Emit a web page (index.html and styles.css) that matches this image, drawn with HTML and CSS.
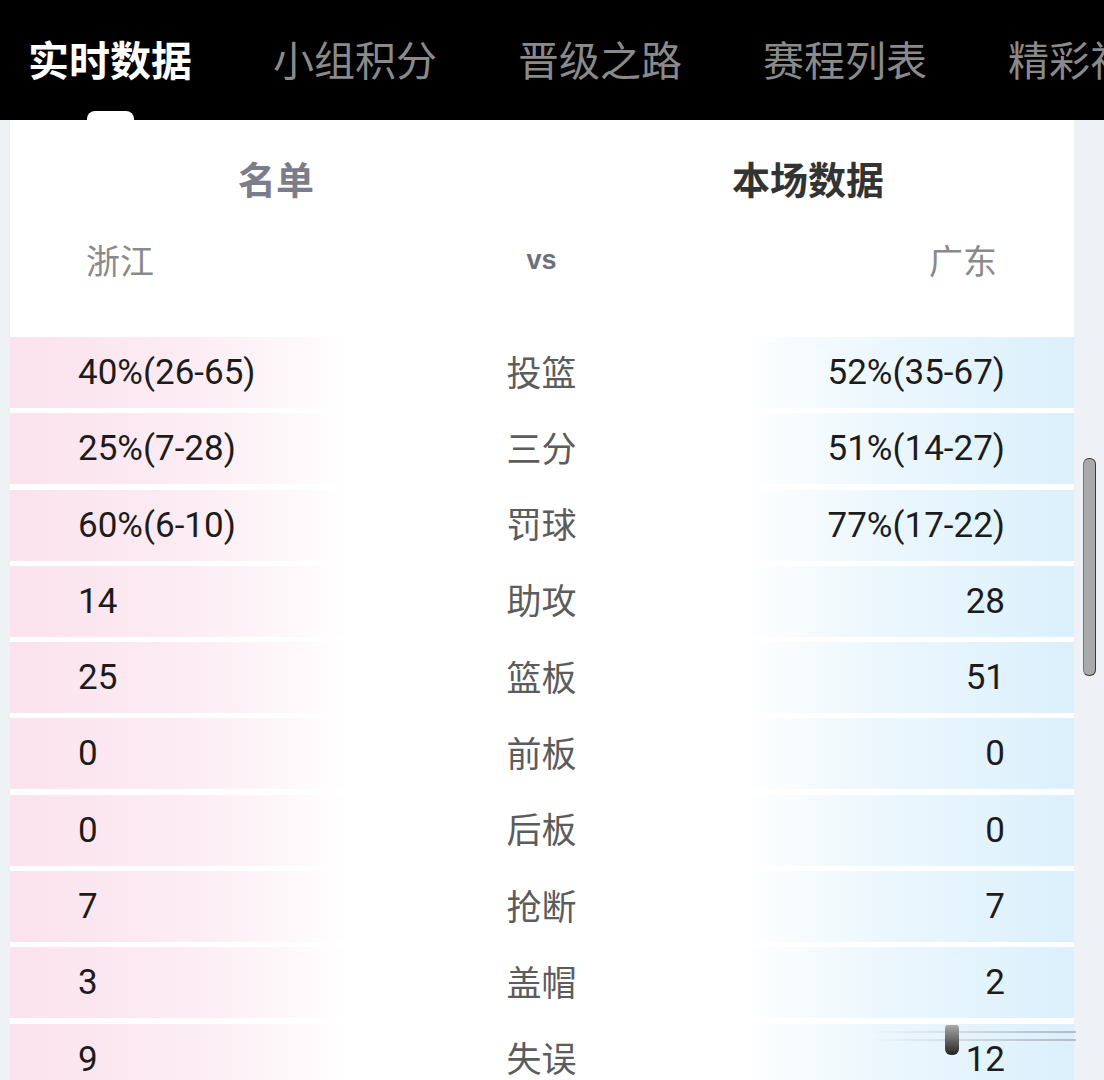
FILE: index.html
```html
<!DOCTYPE html>
<html lang="zh-CN">
<head>
<meta charset="utf-8">
<title>实时数据</title>
<link rel="stylesheet" href="styles.css">
</head>
<body>
<nav class="tabs">
  <div class="tab active">实时数据<span class="indicator"></span></div>
  <div class="tab">小组积分</div>
  <div class="tab">晋级之路</div>
  <div class="tab">赛程列表</div>
  <div class="tab">精彩视频</div>
</nav>
<main class="main">
  <section class="card">
    <div class="head">
      <div class="head-item dim">名单</div>
      <div class="head-item strong">本场数据</div>
    </div>
    <div class="teams">
      <div class="team left">浙江</div>
      <div class="vs">vs</div>
      <div class="team right">广东</div>
    </div>
    <div class="rows">
      <div class="row"><span class="v l">40%(26-65)</span><span class="lab">投篮</span><span class="v r">52%(35-67)</span></div>
      <div class="row"><span class="v l">25%(7-28)</span><span class="lab">三分</span><span class="v r">51%(14-27)</span></div>
      <div class="row"><span class="v l">60%(6-10)</span><span class="lab">罚球</span><span class="v r">77%(17-22)</span></div>
      <div class="row"><span class="v l">14</span><span class="lab">助攻</span><span class="v r">28</span></div>
      <div class="row"><span class="v l">25</span><span class="lab">篮板</span><span class="v r">51</span></div>
      <div class="row"><span class="v l">0</span><span class="lab">前板</span><span class="v r">0</span></div>
      <div class="row"><span class="v l">0</span><span class="lab">后板</span><span class="v r">0</span></div>
      <div class="row"><span class="v l">7</span><span class="lab">抢断</span><span class="v r">7</span></div>
      <div class="row"><span class="v l">3</span><span class="lab">盖帽</span><span class="v r">2</span></div>
      <div class="row"><span class="v l">9</span><span class="lab">失误</span><span class="v r">12</span></div>
    </div>
  </section>
  <aside class="rail"><span class="scrollbar"></span></aside>
  <div class="overlay"><span class="ov-line a"></span><span class="ov-line b"></span><span class="ov-pill"></span></div>
</main>
</body>
</html>
```

FILE: styles.css
```css
html, body {
  margin: 0;
  padding: 0;
}
body {
  width: 1104px;
  height: 1080px;
  overflow: hidden;
  background: #eef1f4;
  font-family: "Noto Sans CJK SC", "Noto Sans", sans-serif;
}
.tabs {
  height: 120px;
  background: #000;
  display: flex;
  align-items: center;
  padding-left: 28px;
  gap: 81px;
  overflow: hidden;
  white-space: nowrap;
  position: relative;
}
.tab {
  position: relative;
  font-size: 41px;
  line-height: 1;
  color: #8a8a8a;
  flex: none;
  height: 120px;
  display: flex;
  align-items: center;
  padding-bottom: 4px;
  box-sizing: border-box;
}
.tab.active {
  color: #fff;
  font-weight: 700;
}
.indicator {
  position: absolute;
  left: 59px;
  top: 111px;
  width: 47px;
  height: 16px;
  border-radius: 8px;
  background: #fff;
}
.main {
  display: flex;
  position: relative;
  height: 960px;
}
.card {
  margin-left: 10px;
  width: 1064px;
  background: #fff;
  height: 960px;
  overflow: hidden;
}
.rail {
  flex: 1;
  position: relative;
  background: #eef1f5;
}
.scrollbar {
  position: absolute;
  left: 9px;
  top: 338px;
  width: 11px;
  height: 216px;
  border-radius: 6px;
  background: #a9a9a9;
  border: 1.5px solid #3a3a3a;
  border-left-color: #777;
}
.head {
  display: grid;
  grid-template-columns: 1fr 1fr;
  padding-top: 34px;
}
.head-item {
  text-align: center;
  font-size: 38px;
  line-height: 48px;
  font-weight: 700;
}
.head-item.dim { color: #7b7e8a; }
.head-item.strong { color: #333; }
.teams {
  margin-top: 34px;
  display: grid;
  grid-template-columns: 1fr auto 1fr;
  align-items: center;
  padding: 0 77px 0 76px;
  height: 48px;
}
.team {
  font-size: 34px;
  line-height: 48px;
  color: #8a8a8a;
  margin-top: 0;
}
.team.right { text-align: right; }
.vs {
  font-family: "Liberation Sans", Arial, sans-serif;
  font-weight: 700;
  font-size: 27px;
  color: #6d707a;
  line-height: 48px;
  margin-top: -1px;
}
.rows {
  margin-top: 53px;
  display: flex;
  flex-direction: column;
  gap: 5.3px;
}
.row {
  height: 71px;
  flex: none;
  display: grid;
  grid-template-columns: 1fr 1fr 1fr;
  align-items: center;
  padding: 0 69px 0 68px;
  background: linear-gradient(to right, #fbe2ed 0, #fcecf3 180px, #fff 340px, #fff 730px, #ecf7fd 870px, #dbf0fc 100%);
}
.v {
  font-family: Roboto, "Liberation Sans", sans-serif;
  font-size: 35px;
  color: #1c1c1c;
  line-height: 1;
}
.v.r { text-align: right; }
.lab {
  text-align: center;
  font-size: 35px;
  color: #5c5c5c;
  line-height: 1;
  padding-bottom: 5px;
}
.overlay {
  position: absolute;
  left: 870px;
  top: 900px;
  width: 234px;
  height: 50px;
  pointer-events: none;
}
.ov-line {
  position: absolute;
  left: 0;
  right: 28px;
  height: 2px;
  background: linear-gradient(to right, rgba(200,200,200,0), rgba(150,150,150,0.6));
}
.ov-line.a { top: 11px; }
.ov-line.b { top: 19px; }
.ov-pill {
  position: absolute;
  left: 75px;
  top: 5px;
  width: 14px;
  height: 30px;
  border-radius: 3px 3px 6px 6px;
  background: linear-gradient(to bottom, #aaa, #222);
}
```
